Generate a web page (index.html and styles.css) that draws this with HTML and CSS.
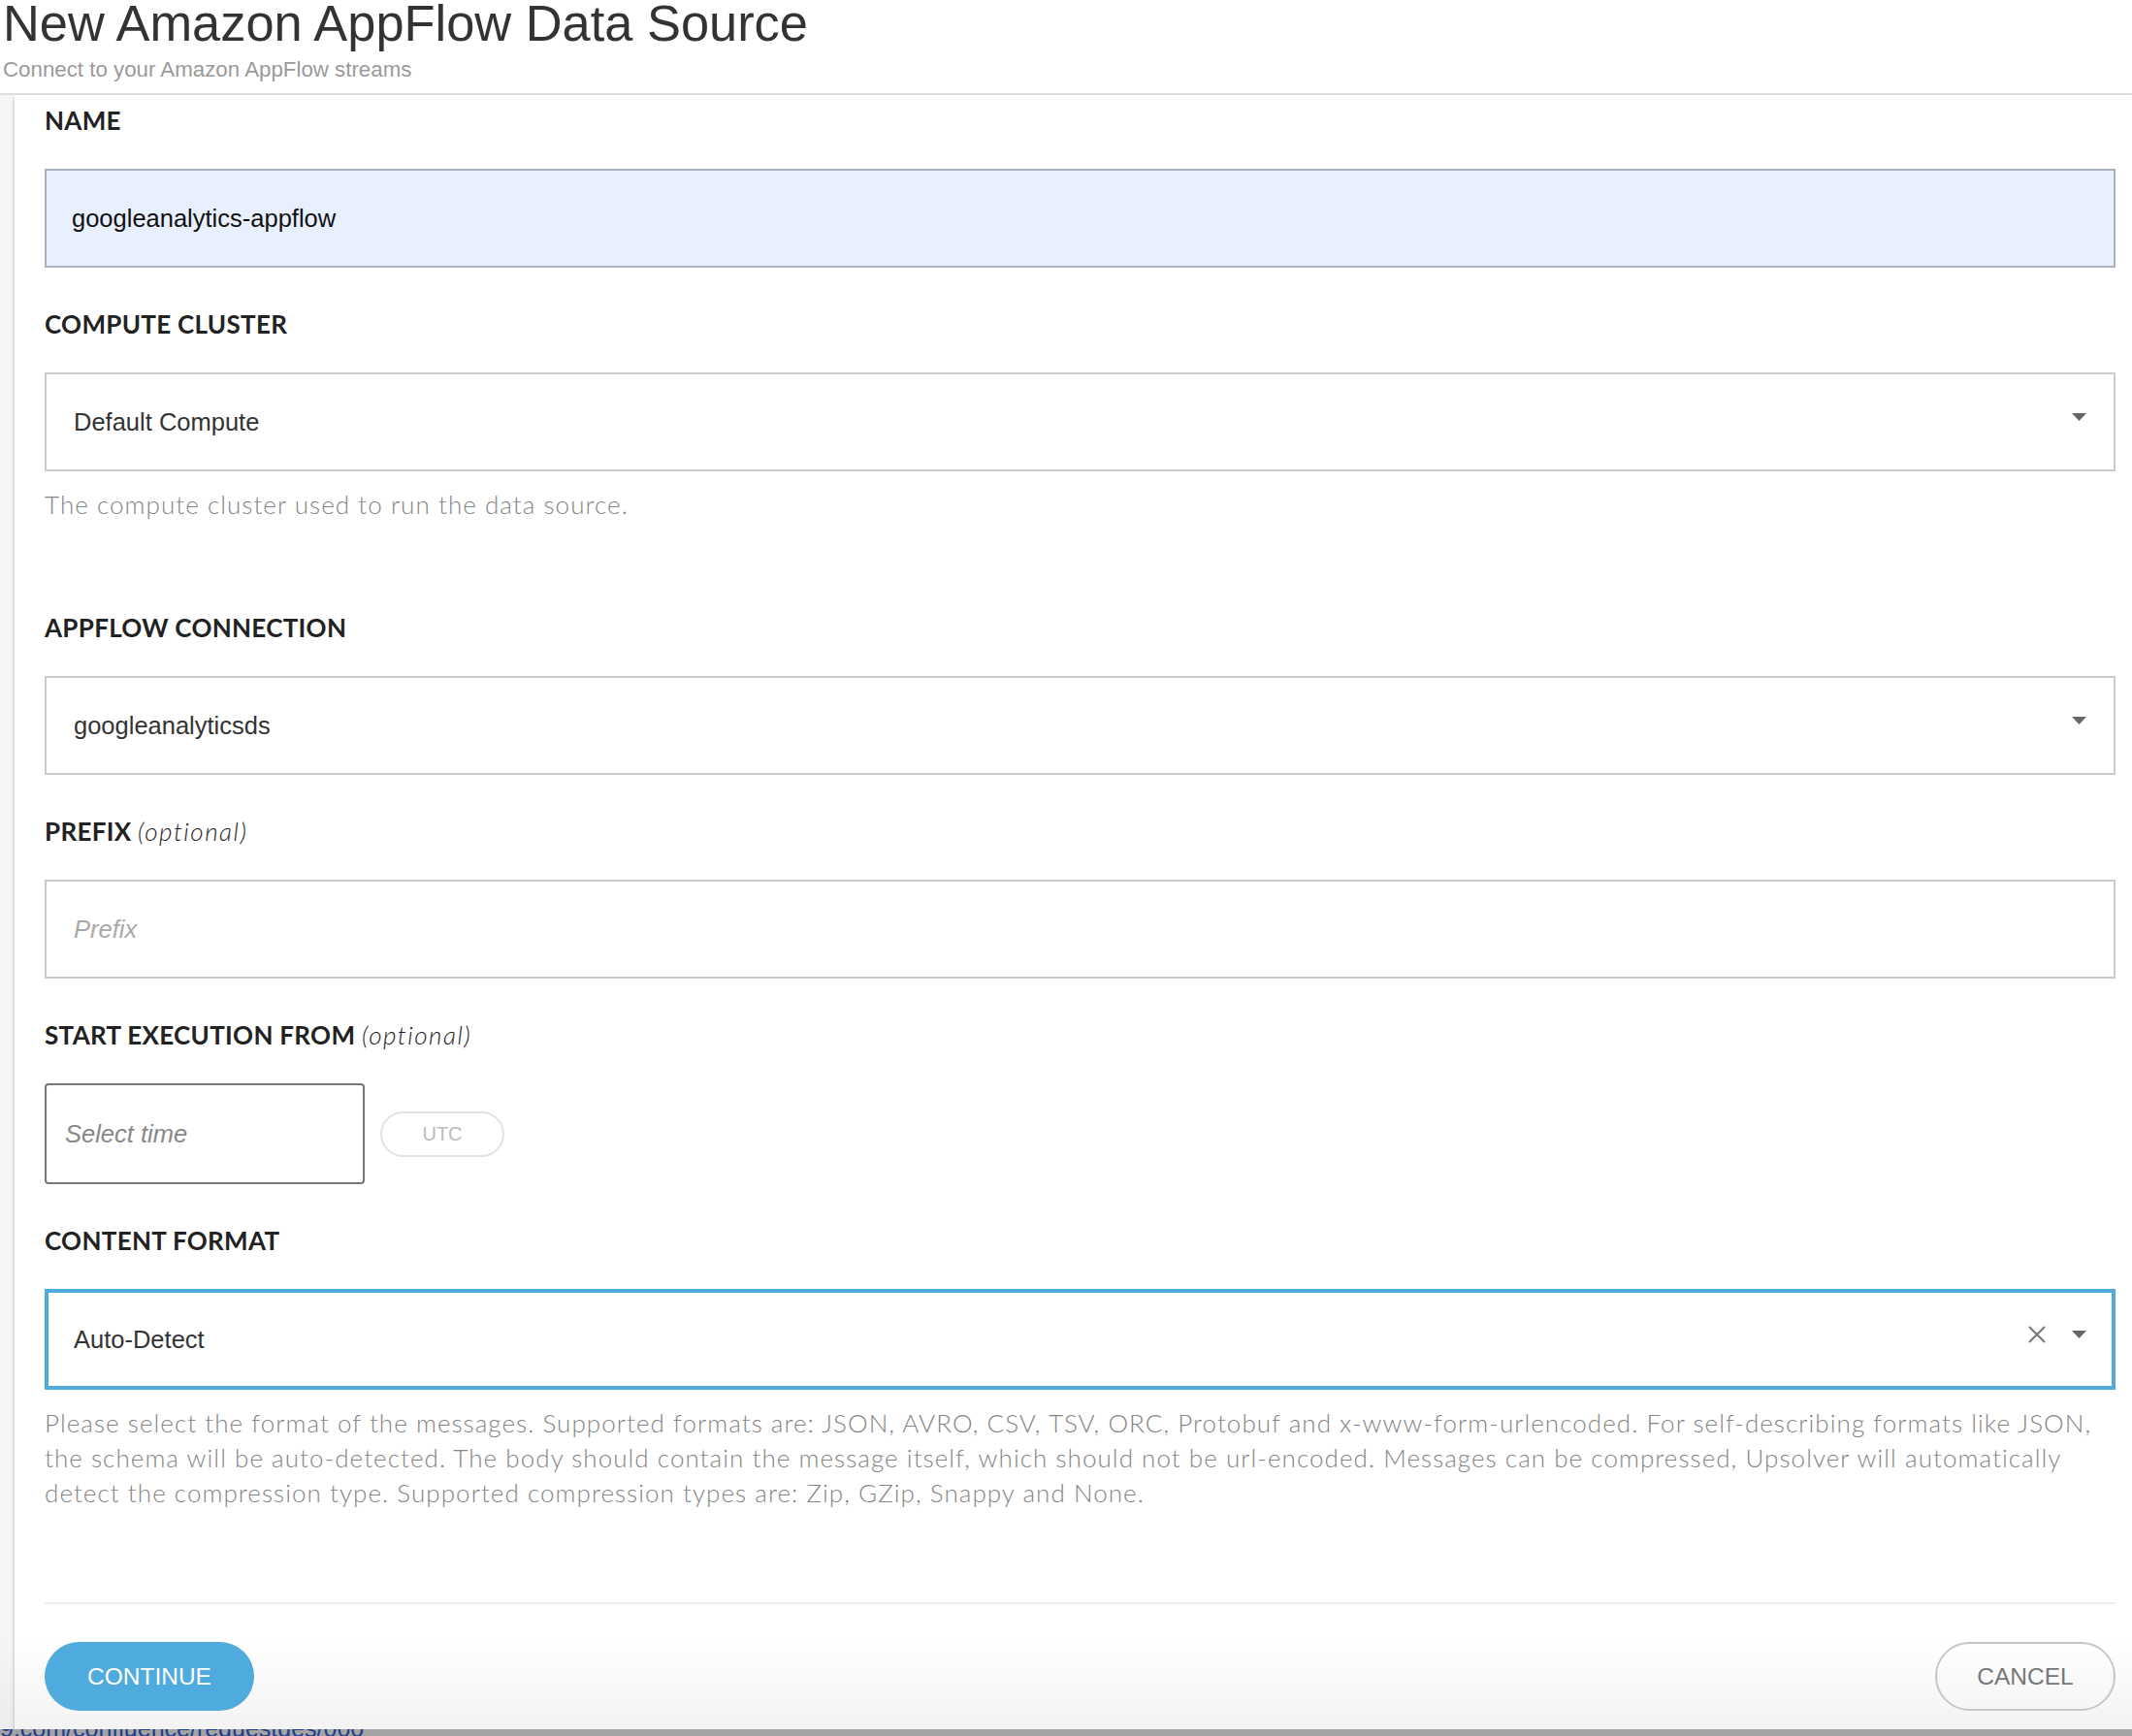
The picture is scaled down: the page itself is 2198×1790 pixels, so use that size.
FILE: index.html
```html
<!DOCTYPE html>
<html lang="en">
<head>
<meta charset="utf-8">
<title>New Amazon AppFlow Data Source</title>
<link rel="stylesheet" href="styles.css">
</head>
<body>
<div class="page">
  <header class="head">
    <h1 class="title">New Amazon AppFlow Data Source</h1>
    <p class="subtitle">Connect to your Amazon AppFlow streams</p>
  </header>
  <div class="body">
    <div class="rail"></div>
    <main class="panel">
      <div class="field">
        <div class="label">NAME</div>
        <div class="input input-filled"><span class="value">googleanalytics-appflow</span></div>
      </div>

      <div class="field field-help">
        <div class="label">COMPUTE CLUSTER</div>
        <div class="input select">
          <span class="value">Default Compute</span>
          <span class="icons">
            <svg class="caret" width="15" height="8" viewBox="0 0 15 8"><path d="M0 0H15L7.5 8Z"/></svg>
          </span>
        </div>
        <p class="help">The compute cluster used to run the data source.</p>
      </div>

      <div class="field">
        <div class="label">APPFLOW CONNECTION</div>
        <div class="input select">
          <span class="value">googleanalyticsds</span>
          <span class="icons">
            <svg class="caret" width="15" height="8" viewBox="0 0 15 8"><path d="M0 0H15L7.5 8Z"/></svg>
          </span>
        </div>
      </div>

      <div class="field">
        <div class="label">PREFIX <em class="opt">(optional)</em></div>
        <div class="input"><span class="value placeholder">Prefix</span></div>
      </div>

      <div class="field">
        <div class="label">START EXECUTION FROM <em class="opt">(optional)</em></div>
        <div class="time-row">
          <div class="time-box"><span class="time-ph">Select time</span></div>
          <div class="utc">UTC</div>
        </div>
      </div>

      <div class="field field-last">
        <div class="label">CONTENT FORMAT</div>
        <div class="input select focused">
          <span class="value">Auto-Detect</span>
          <span class="icons">
            <svg class="clear" width="18" height="18" viewBox="0 0 18 18"><path d="M1 1L17 17M17 1L1 17"/></svg>
            <svg class="caret" width="15" height="8" viewBox="0 0 15 8"><path d="M0 0H15L7.5 8Z"/></svg>
          </span>
        </div>
        <p class="help help-long">Please select the format of the messages. Supported formats are: JSON, AVRO, CSV, TSV, ORC, Protobuf and x-www-form-urlencoded. For self-describing formats like JSON, the schema will be auto-detected. The body should contain the message itself, which should not be url-encoded. Messages can be compressed, Upsolver will automatically detect the compression type. Supported compression types are: Zip, GZip, Snappy and None.</p>
      </div>

      <div class="divider"></div>

      <div class="actions">
        <button class="btn btn-primary">CONTINUE</button>
        <button class="btn btn-secondary">CANCEL</button>
      </div>
    </main>
  </div>
  <div class="statusbar"><span class="status-link">9.com/confluence/requestdes/000</span></div>
</div>
</body>
</html>
```

FILE: styles.css
```css
* { box-sizing: border-box; }

html, body {
  margin: 0;
  padding: 0;
  background: #ffffff;
}

.page {
  width: 2198px;
  height: 1790px;
  overflow: hidden;
  display: flex;
  flex-direction: column;
  font-family: "Liberation Sans", Arial, sans-serif;
}

.head {
  padding: 0 0 13px 3px;
  border-bottom: 2px solid #dedede;
}

.title {
  margin: 0;
  font-family: "Liberation Sans", Arial, sans-serif;
  font-weight: normal;
  font-size: 52.4px;
  line-height: 48px;
  color: #333333;
}

.subtitle {
  margin: 13px 0 0;
  font-size: 22.3px;
  line-height: 22px;
  color: #9a9a9a;
}

.body {
  flex: 1;
  display: flex;
  min-height: 0;
}

.rail {
  width: 15px;
  background: linear-gradient(to bottom, #f5f5f5 0, #f5f5f5 calc(100% - 90px), #ececec 100%);
}

.panel {
  flex: 1;
  padding: 11px 17px 20px 31px;
  background: linear-gradient(to bottom, #ffffff 0, #ffffff calc(100% - 95px), #f3f3f3 100%);
  box-shadow: 0 3px 4px rgba(0,0,0,0.25);
}

.field {
  margin-bottom: 43px;
}

.field-help {
  margin-bottom: 94px;
}

.field-last {
  margin-bottom: 0;
}

.label {
  font-family: Lato, "Open Sans", sans-serif;
  font-weight: 700;
  font-size: 26px;
  letter-spacing: 0.3px;
  line-height: 30px;
  color: #222222;
  margin-bottom: 35px;
}

.opt {
  font-weight: 300;
  font-style: italic;
  letter-spacing: 1.5px;
  color: #1e1e1e;
}

.input {
  height: 102px;
  border: 2px solid #cbcbcb;
  display: flex;
  align-items: center;
  padding: 0 28px;
  font-family: "Liberation Sans", Arial, sans-serif;
  font-size: 25.5px;
  color: #333333;
  background: #ffffff;
}

.input-filled {
  background: #e8f0fe;
  border-color: #aab0bb;
  padding-left: 26px;
  color: #111111;
}

.value {
  flex: 1;
}

.placeholder {
  font-style: italic;
  color: #a9a9a9;
}

.icons {
  display: flex;
  align-items: center;
  gap: 27px;
  margin-bottom: 10px;
}

.caret path {
  fill: #666666;
}

.clear path {
  stroke: #777777;
  stroke-width: 2;
  fill: none;
}

.focused {
  border: 4px solid #4eaadf;
  height: 104px;
  padding: 0 26px;
}

.help {
  margin: 16px 0 0;
  font-family: Lato, "Open Sans", sans-serif;
  font-weight: 300;
  font-size: 26px;
  letter-spacing: 1.05px;
  line-height: 36px;
  color: #858585;
}

.time-row {
  display: flex;
  align-items: center;
  gap: 16px;
}

.time-box {
  width: 330px;
  height: 104px;
  border: 2px solid #777777;
  border-radius: 4px;
  display: flex;
  align-items: center;
  padding-left: 19px;
}

.time-ph {
  font-style: italic;
  font-size: 25.5px;
  color: #888888;
}

.utc {
  width: 128px;
  height: 47px;
  border: 2px solid #e2e2e2;
  border-radius: 24px;
  display: flex;
  align-items: center;
  justify-content: center;
  font-size: 20px;
  color: #bbbbbb;
}

.divider {
  margin-top: 95px;
  border-top: 2px solid #ededed;
}

.actions {
  margin-top: 39px;
  display: flex;
  justify-content: space-between;
}

.btn {
  height: 71px;
  border-radius: 36px;
  font-family: "Liberation Sans", Arial, sans-serif;
  font-size: 24.5px;
  padding: 0 44px;
  cursor: pointer;
}

.btn-primary {
  background: #4faade;
  border: none;
  color: #ffffff;
  width: 216px;
}

.btn-secondary {
  background: transparent;
  border: 2px solid #c6c6c6;
  color: #777777;
  width: 186px;
  padding: 0 40px;
}

.statusbar {
  height: 7px;
  background: #a3a3a3;
  overflow: hidden;
}

.status-link {
  display: block;
  margin-top: -13px;
  font-size: 25px;
  line-height: 24px;
  color: #1e3d8f;
}
```
